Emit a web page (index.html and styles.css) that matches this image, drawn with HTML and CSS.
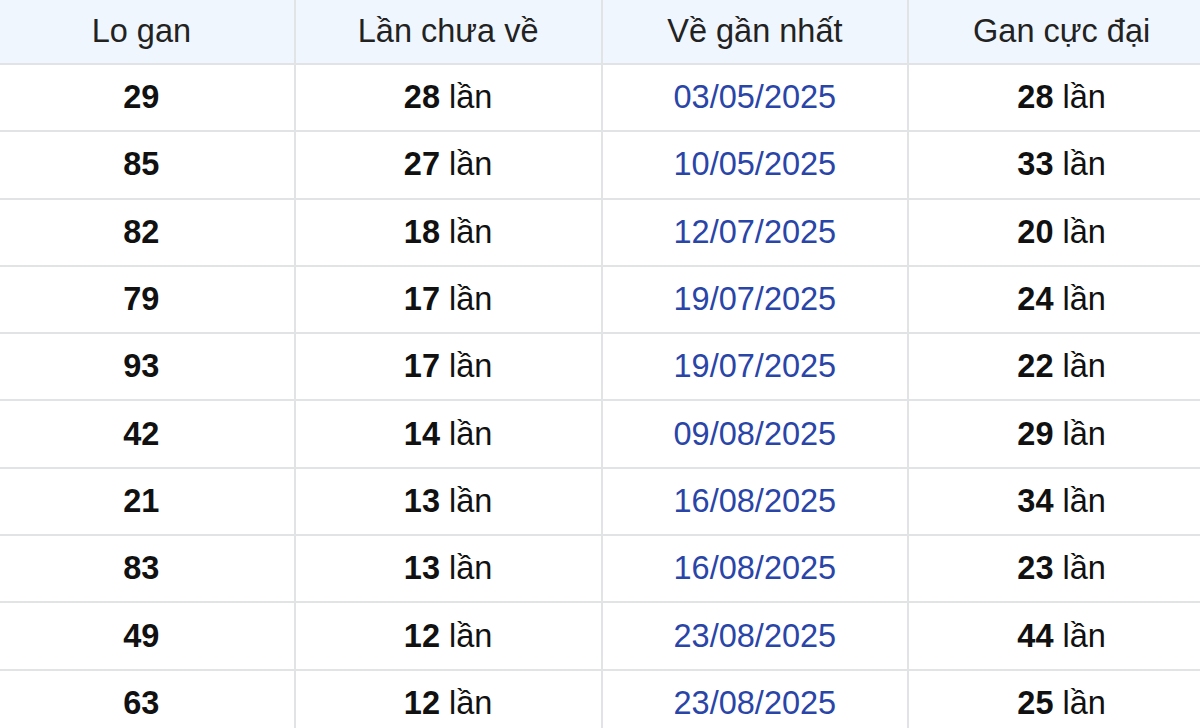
FILE: index.html
```html
<!DOCTYPE html>
<html lang="vi">
<head>
<meta charset="utf-8">
<title>Lo gan</title>
<link rel="stylesheet" href="styles.css">
</head>
<body>
<table class="gan-table">
  <colgroup>
    <col class="col">
    <col class="col">
    <col class="col">
    <col class="col">
  </colgroup>
  <thead>
    <tr>
      <th>Lo gan</th>
      <th>Lần chưa về</th>
      <th>Về gần nhất</th>
      <th>Gan cực đại</th>
    </tr>
  </thead>
  <tbody>
    <tr><td class="num">29</td><td><b>28</b> lần</td><td class="date">03/05/2025</td><td><b>28</b> lần</td></tr>
    <tr><td class="num">85</td><td><b>27</b> lần</td><td class="date">10/05/2025</td><td><b>33</b> lần</td></tr>
    <tr><td class="num">82</td><td><b>18</b> lần</td><td class="date">12/07/2025</td><td><b>20</b> lần</td></tr>
    <tr><td class="num">79</td><td><b>17</b> lần</td><td class="date">19/07/2025</td><td><b>24</b> lần</td></tr>
    <tr><td class="num">93</td><td><b>17</b> lần</td><td class="date">19/07/2025</td><td><b>22</b> lần</td></tr>
    <tr><td class="num">42</td><td><b>14</b> lần</td><td class="date">09/08/2025</td><td><b>29</b> lần</td></tr>
    <tr><td class="num">21</td><td><b>13</b> lần</td><td class="date">16/08/2025</td><td><b>34</b> lần</td></tr>
    <tr><td class="num">83</td><td><b>13</b> lần</td><td class="date">16/08/2025</td><td><b>23</b> lần</td></tr>
    <tr><td class="num">49</td><td><b>12</b> lần</td><td class="date">23/08/2025</td><td><b>44</b> lần</td></tr>
    <tr><td class="num">63</td><td><b>12</b> lần</td><td class="date">23/08/2025</td><td><b>25</b> lần</td></tr>
  </tbody>
</table>
</body>
</html>
```

FILE: styles.css
```css
html, body {
  margin: 0;
  padding: 0;
  background: #ffffff;
  overflow: hidden;
}

body {
  font-family: "Liberation Sans", Arial, sans-serif;
  color: #111111;
}

.gan-table {
  border-collapse: collapse;
  table-layout: fixed;
  width: 1229px;
  margin-left: -13px;
  margin-top: -2px;
  font-size: 32.5px;
}

.gan-table .col {
  width: 25%;
}

.gan-table th,
.gan-table td {
  border: 2px solid #e2e3e5;
  text-align: center;
  padding: 0;
}

.gan-table th {
  height: 63px;
  background: #eff6fd;
  font-weight: normal;
  color: #222222;
}

.gan-table td {
  height: 65.3px;
}

.gan-table td.num {
  font-weight: bold;
  color: #111111;
}

.gan-table td b {
  font-weight: bold;
  color: #111111;
}

.gan-table td.date {
  color: #2a45a8;
}
```
